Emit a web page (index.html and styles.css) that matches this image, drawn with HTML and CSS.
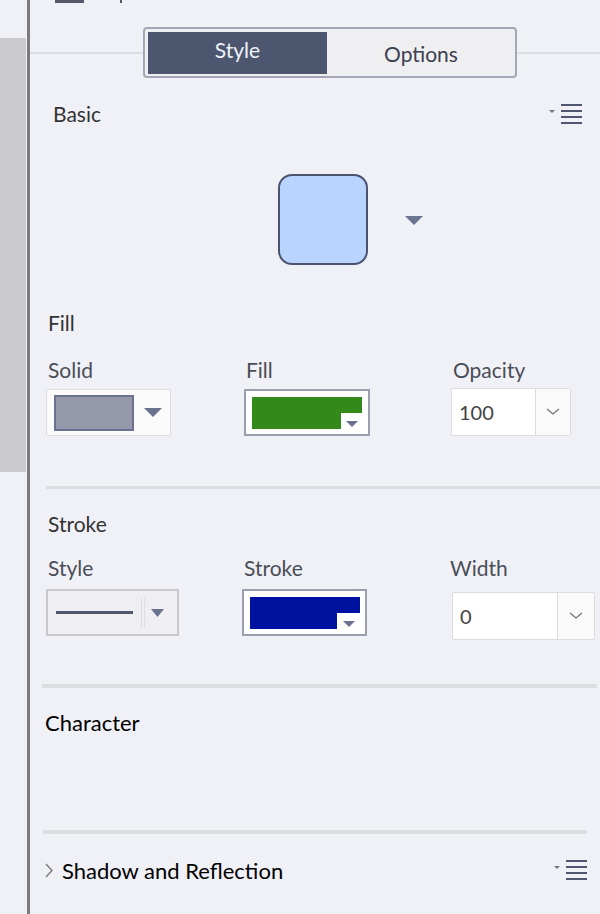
FILE: index.html
```html
<!DOCTYPE html>
<html>
<head>
<meta charset="utf-8">
<link rel="stylesheet" href="styles.css">
</head>
<body>
<div class="app">
  <div class="rail"><div class="rail-block"></div></div>
  <div class="divider"></div>
  <div class="panel">
    <div class="top-strip"><span class="top-icon"></span><span class="top-mark"></span></div>
    <div class="tab-row">
      <div class="tabs">
        <div class="tab tab-active">Style</div>
        <div class="tab tab-idle">Options</div>
      </div>
    </div>
    <div class="section-head basic-head">
      <span class="head-text">Basic</span>
      <span class="menu-icon">
        <svg width="34" height="22" viewBox="0 0 34 22"><polygon points="0,7 6,7 3,10" fill="#6f768c"/><rect x="12" y="1" width="21" height="2" fill="#4f566d"/><rect x="12" y="7" width="21" height="2" fill="#4f566d"/><rect x="12" y="13" width="21" height="2" fill="#4f566d"/><rect x="12" y="19" width="21" height="2" fill="#4f566d"/></svg>
      </span>
    </div>
    <div class="preview-row">
      <div class="shape"></div>
      <svg class="preview-caret" width="18" height="10" viewBox="0 0 18 10"><polygon points="0,0 18,0 9,9" fill="#6b7490"/></svg>
    </div>

    <div class="group-title fill-title">Fill</div>
    <div class="fields fill-fields">
      <div class="field f1">
        <div class="label">Solid</div>
        <div class="ctl ctl-solid">
          <div class="swatch"></div>
          <svg class="caret" width="18" height="10" viewBox="0 0 18 10"><polygon points="0,0 18,0 9,9" fill="#6b7290"/></svg>
        </div>
      </div>
      <div class="field f2">
        <div class="label">Fill</div>
        <div class="ctl ctl-color">
          <svg width="110" height="32" viewBox="0 0 110 32"><path d="M0 0H110V16H89V32H0Z" fill="#338a1b"/><polygon points="94,24 106,24 100,30" fill="#6b7290"/></svg>
        </div>
      </div>
      <div class="field f3">
        <div class="label">Opacity</div>
        <div class="ctl ctl-num ctl-opacity">
          <span class="num">100</span>
          <span class="num-btn"><svg width="14" height="8" viewBox="0 0 14 8"><polyline points="1,1 7,6 13,1" fill="none" stroke="#707070" stroke-width="1.2"/></svg></span>
        </div>
      </div>
    </div>

    <div class="rule rule1"></div>

    <div class="group-title stroke-title">Stroke</div>
    <div class="fields stroke-fields">
      <div class="field g1">
        <div class="label">Style</div>
        <div class="ctl ctl-style">
          <span class="line-sample"></span>
          <span class="dbl-sep"></span>
          <svg class="caret" width="13" height="9" viewBox="0 0 13 9"><polygon points="0,0 13,0 6.5,8" fill="#6b7290"/></svg>
        </div>
      </div>
      <div class="field g2">
        <div class="label">Stroke</div>
        <div class="ctl ctl-color">
          <svg width="110" height="32" viewBox="0 0 110 32"><path d="M0 0H110V16H87V32H0Z" fill="#0012a0"/><polygon points="93,24 105,24 99,30" fill="#6b7290"/></svg>
        </div>
      </div>
      <div class="field g3">
        <div class="label label-width">Width</div>
        <div class="ctl ctl-num ctl-width">
          <span class="num">0</span>
          <span class="num-btn"><svg width="14" height="8" viewBox="0 0 14 8"><polyline points="1,1 7,6 13,1" fill="none" stroke="#707070" stroke-width="1.2"/></svg></span>
        </div>
      </div>
    </div>

    <div class="rule rule2"></div>
    <div class="group-title char-title">Character</div>
    <div class="rule rule3"></div>

    <div class="section-head shadow-head">
      <span class="shadow-left">
        <svg width="8" height="15" viewBox="0 0 8 15"><polyline points="1,1 7,7.5 1,14" fill="none" stroke="#777" stroke-width="1.3"/></svg>
        <span class="shadow-text">Shadow and Reflection</span>
      </span>
      <span class="menu-icon">
        <svg width="34" height="22" viewBox="0 0 34 22"><polygon points="0,7 6,7 3,10" fill="#6f768c"/><rect x="12" y="1" width="21" height="2" fill="#4f566d"/><rect x="12" y="7" width="21" height="2" fill="#4f566d"/><rect x="12" y="13" width="21" height="2" fill="#4f566d"/><rect x="12" y="19" width="21" height="2" fill="#4f566d"/></svg>
      </span>
    </div>
  </div>
</div>
</body>
</html>
```
FILE: styles.css
```css
* { box-sizing: border-box; }
html, body { margin: 0; padding: 0; }
body {
  background: #f0f1f6;
  font-family: Lato, "Open Sans", sans-serif;
  color: #333;
  width: 600px;
  height: 914px;
  overflow: hidden;
}
.app { display: flex; height: 914px; }
.rail { width: 27px; flex: none; }
.rail-block { margin-top: 38px; height: 434px; width: 26px; background: #cbcbcd; }
.divider { width: 3px; flex: none; background: #7b7b7e; }
.panel { flex: 1; display: flex; flex-direction: column; }

.top-strip { height: 4px; display: flex; align-items: flex-start; }
.top-icon { margin-left: 25px; width: 29px; height: 3px; background: #55596a; }
.top-mark { margin-left: 36px; width: 2px; height: 3px; background: #55596a; }

.tab-row {
  height: 86px;
  padding-top: 23px;
  padding-left: 113px;
  background: linear-gradient(#dcdde2, #dcdde2) no-repeat 0 48px / 100% 2px;
}
.tabs {
  width: 374px;
  height: 51px;
  border: 2px solid #a3a6b6;
  border-radius: 4px;
  background: #efeff1;
  display: flex;
  padding: 3px 0 2px 3px;
}
.tab { height: 42px; display: flex; align-items: center; justify-content: center; font-size: 21px; }
.tab-active { width: 179px; background: #4d566f; color: #eef1f8; padding-bottom: 8px; }
.tab-idle { flex: 1; color: #3c4050; padding-top: 0; }

.section-head { display: flex; align-items: center; justify-content: space-between; }
.basic-head { height: 48px; padding-left: 23px; padding-right: 17px; }
.head-text { font-size: 21px; color: #333; padding-bottom: 2px; }
.menu-icon { display: flex; }
.menu-icon svg { display: block; }

.preview-row { margin-top: 36px; height: 91px; display: flex; align-items: center; padding-left: 248px; }
.shape {
  width: 90px;
  height: 91px;
  background: #b9d4fe;
  border: 2px solid #4a5370;
  border-radius: 14px;
}
.preview-caret { margin-left: 37px; margin-top: 2px; }

.group-title { height: 40px; display: flex; align-items: center; font-size: 21px; color: #333; }
.fill-title { margin-top: 37px; padding-left: 18px; }
.stroke-title { margin-top: 14px; padding-left: 18px; }
.char-title { margin-top: 14px; padding-left: 15px; color: #000; font-size: 22px; }

.fields { display: flex; margin-top: 12px; padding-left: 16px; }
.field { display: flex; flex-direction: column; }
.label { height: 28px; display: flex; align-items: center; font-size: 21px; color: #4a4d57; padding-left: 2px; margin-bottom: 6px; }
.fill-fields { margin-top: 13px; }
.stroke-fields { margin-top: 11px; }
.stroke-fields .label { margin-bottom: 7px; padding-bottom: 2px; }
.f1 { width: 198px; }
.f2 { width: 207px; }
.g1 { width: 196px; }
.g2 { width: 210px; }
.label-width { margin-left: -4px; }

.ctl { height: 47px; display: flex; align-items: center; }
.ctl-solid {
  width: 125px;
  border: 1px solid #dcdce0;
  border-radius: 2px;
  background: #fbfbfc;
  padding-left: 7px;
}
.swatch { width: 80px; height: 36px; background: #9599ab; border: 2px solid #6b7290; }
.caret { margin-left: 10px; margin-top: 1px; }

.ctl-color {
  width: 126px;
  border: 2px solid #9c9fb1;
  background: #fff;
  padding-left: 6px;
}
.ctl-color svg { display: block; }
.stroke-fields .ctl-color { width: 125px; }

.ctl-num {
  border: 1px solid #dcdce0;
  border-radius: 2px;
  background: #fff;
  align-items: stretch;
}
.ctl-opacity { width: 120px; height: 48px; margin-top: -1px; }
.ctl-width { width: 143px; height: 48px; margin-top: 3px; }
.num { flex: 1; display: flex; align-items: center; padding-left: 7px; font-size: 20px; color: #444; }
.num-btn { width: 35px; border-left: 1px solid #dcdce0; background: #fafafa; display: flex; align-items: center; justify-content: center; }
.ctl-width .num-btn { width: 37px; }

.ctl-style {
  width: 133px;
  background: #efeff1;
  border: 2px solid #c8c8cc;
  padding-left: 8px;
}
.line-sample { width: 77px; height: 3px; background: #4f566b; }
.dbl-sep { width: 4px; height: 30px; margin-left: 8px; border-left: 1px solid #dedee2; border-right: 1px solid #dedee2; }
.ctl-style .caret { margin-left: 6px; }

.rule { height: 3px; background: #dcdde0; }
.rule1 { margin-top: 50px; margin-left: 16px; }
.rule2 { margin-top: 44px; margin-left: 12px; margin-right: 3px; height: 4px; }
.rule3 { margin-top: 88px; margin-left: 13px; margin-right: 13px; height: 4px; }

.shadow-head { margin-top: 16px; height: 40px; padding-left: 15px; padding-right: 12px; }
.shadow-left { display: flex; align-items: center; }
.shadow-left svg { display: block; margin-top: 1px; }
.shadow-text { margin-left: 9px; font-size: 22px; color: #000; }
```
